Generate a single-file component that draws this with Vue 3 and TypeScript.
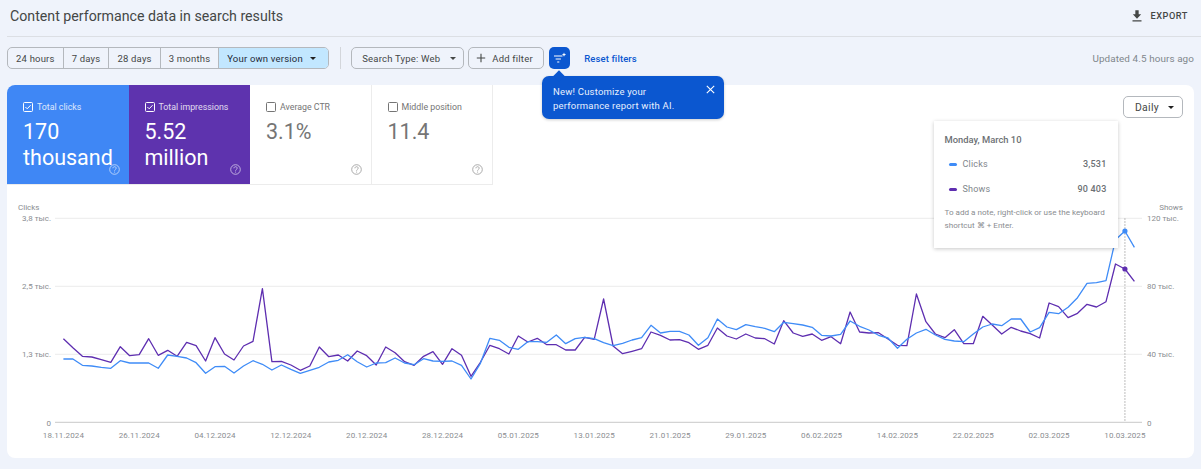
<script setup lang="ts">
const purple: number[] = [431,458,484,486,494,502,455,482,479,431,481,466,484,442,452,498,428,477,495,453,439,281,500,499,510,526,513,456,485,480,498,468,482,510,456,473,500,511,484,470,508,461,481,544,502,451,461,477,423,441,430,449,449,465,465,427,433,312,453,476,469,461,411,421,435,434,443,463,451,399,423,432,417,429,431,447,377,414,424,417,436,425,446,351,411,414,413,432,451,452,297,380,417,428,404,446,446,364,390,417,397,408,416,429,324,335,368,355,328,336,320,207,222,259]
const blue: number[] = [492,492,511,513,517,520,497,504,504,504,520,480,484,489,503,535,515,514,534,513,497,508,525,510,523,535,526,517,501,496,479,500,516,504,503,489,504,509,491,498,499,498,511,552,505,430,436,457,463,440,440,442,420,446,431,427,431,443,452,445,435,428,391,414,409,409,420,451,428,372,396,404,389,395,400,410,382,386,390,397,421,423,418,378,394,405,421,429,460,433,414,403,420,433,438,440,417,396,387,392,372,372,411,398,352,356,337,308,265,263,257,134,108,157]

const px = (i: number): number => 56.4 + 9.478 * i
const py = (v: number): number => 10 + v / 3
const toPoints = (list: number[]): string =>
  list.map((v, i) => `${px(i).toFixed(1)},${py(v).toFixed(1)}`).join(' ')

const purplePoints = toPoints(purple)
const bluePoints = toPoints(blue)
const hoverX = px(112)

const ranges = ['24 hours', '7 days', '28 days', '3 months']
const metrics = [
  { label: 'Total clicks', lines: ['170', 'thousand'], cls: 'blue', on: true },
  { label: 'Total impressions', lines: ['5.52', 'million'], cls: 'purple', on: true },
  { label: 'Average CTR', lines: ['3.1%'], cls: '', on: false },
  { label: 'Middle position', lines: ['11.4'], cls: '', on: false },
]
const grid = [
  { y: 33.3, left: '3,8 тыс.', right: '120 тыс.' },
  { y: 101.3, left: '2,5 тыс.', right: '80 тыс.' },
  { y: 169.3, left: '1,3 тыс.', right: '40 тыс.' },
]
const dates = ['18.11.2024','26.11.2024','04.12.2024','12.12.2024','20.12.2024','28.12.2024','05.01.2025','13.01.2025','21.01.2025','29.01.2025','06.02.2025','14.02.2025','22.02.2025','02.03.2025','10.03.2025']
</script>

<template>
  <div class="page">
    <header class="top">
      <h1>Content performance data in search results</h1>
      <div class="export">
        <svg width="10" height="12" viewBox="0 0 12 14"><path d="M4 0h4v5h3L6 10.2 1 5h3zM.6 12h10.8v1.6H.6z" fill="#444746"/></svg>
        <span>EXPORT</span>
      </div>
    </header>

    <div class="toolbar">
      <div class="group">
        <span v-for="r in ranges" :key="r" class="seg">{{ r }}</span>
        <span class="seg active">Your own version <i class="caret dark"></i></span>
      </div>
      <span class="divider"></span>
      <span class="chip search">Search Type: Web <i class="caret"></i></span>
      <span class="chip add">
        <svg width="10" height="10" viewBox="0 0 10 10"><path d="M5 .8v8.4M.8 5h8.4" stroke="#444746" stroke-width="1.1" fill="none"/></svg>
        Add filter
      </span>
      <span class="ai">
        <svg width="14" height="12" viewBox="0 0 14 12"><path d="M1 4h8.5M2.6 7h5.3M4.2 10h2.1" stroke="#fff" stroke-width="1.2" fill="none"/><path d="M11 .6l.6 1.5 1.5.6-1.5.6-.6 1.5-.6-1.5-1.5-.6 1.5-.6z" fill="#fff"/></svg>
      </span>
      <span class="reset">Reset filters</span>
      <span class="updated">Updated 4.5 hours ago</span>
      <div class="promo">
        <span class="arrow"></span>
        <p>New! Customize your<br />performance report with AI.</p>
        <svg class="close" width="9" height="9" viewBox="0 0 9 9"><path d="M.8.8l7.4 7.4M8.2.8L.8 8.2" stroke="#fff" stroke-width="1.1" fill="none"/></svg>
      </div>
    </div>

    <section class="card">
      <div class="head">
        <div class="metrics">
          <div v-for="m in metrics" :key="m.label" class="metric" :class="m.cls">
            <div class="label">
              <svg width="10" height="10" viewBox="0 0 10 10">
                <rect x=".5" y=".5" width="9" height="9" rx="1" fill="none" stroke="currentColor" stroke-width="1"/>
                <path v-if="m.on" d="M2.4 5l1.8 1.8 3.4-3.6" fill="none" stroke="currentColor" stroke-width="1"/>
              </svg>
              <span>{{ m.label }}</span>
            </div>
            <div class="value">
              <div v-for="l in m.lines" :key="l">{{ l }}</div>
            </div>
            <svg class="help" width="11" height="11" viewBox="0 0 11 11">
              <circle cx="5.5" cy="5.5" r="4.8" fill="none" stroke="currentColor" stroke-width=".8"/>
              <path d="M3.9 4.3c0-2.1 3.3-2.1 3.3-.1 0 1.2-1.6 1.2-1.6 2.5" fill="none" stroke="currentColor" stroke-width=".8"/>
              <circle cx="5.6" cy="8" r=".55" fill="currentColor"/>
            </svg>
          </div>
        </div>
        <span class="chip daily">Daily <i class="caret dark"></i></span>
      </div>

      <svg class="chart" width="1187" height="273" viewBox="0 0 1187 273">
        <text x="11" y="25" class="axis">Clicks</text>
        <text x="1176" y="25" class="axis" text-anchor="end">Shows</text>
        <g v-for="g in grid" :key="g.y">
          <line x1="48" x2="1135" :y1="g.y" :y2="g.y" stroke="#ececec" stroke-width="1"/>
          <text x="44" :y="g.y + 3" class="axis" text-anchor="end">{{ g.left }}</text>
          <text x="1140" :y="g.y + 3" class="axis">{{ g.right }}</text>
        </g>
        <line x1="48" x2="1135" y1="237.3" y2="237.3" stroke="#c8c8c8" stroke-width="1"/>
        <text x="44" y="240.5" class="axis" text-anchor="end">0</text>
        <text x="1140" y="240.5" class="axis">0</text>
        <text v-for="(d, i) in dates" :key="d" :x="px(i * 8)" y="253" class="axis date" text-anchor="middle">{{ d }}</text>
        <line :x1="hoverX" :x2="hoverX" y1="33" y2="237" stroke="#bdbdbd" stroke-width="1" stroke-dasharray="2 1"/>
        <polyline :points="purplePoints" fill="none" stroke="#5e2eb0" stroke-width="1.3" stroke-linejoin="round"/>
        <polyline :points="bluePoints" fill="none" stroke="#3f8cf7" stroke-width="1.3" stroke-linejoin="round"/>
        <circle :cx="hoverX" :cy="py(108)" r="2.6" fill="#3f8cf7"/>
        <circle :cx="hoverX" :cy="py(222)" r="2.6" fill="#5e2eb0"/>
      </svg>

      <div class="tip">
        <div class="tip-title">Monday, March 10</div>
        <div class="tip-row first">
          <i class="dash b"></i><span class="name">Clicks</span><span class="num">3,531</span>
        </div>
        <div class="tip-row second">
          <i class="dash p"></i><span class="name">Shows</span><span class="num">90 403</span>
        </div>
        <p class="note">To add a note, right-click or use the keyboard<br />shortcut ⌘ + Enter.</p>
      </div>
    </section>
  </div>
</template>

<style>
html, body { margin: 0; background: #eff3fb; overflow: hidden; }
</style>

<style scoped>
.page {
  width: 1201px;
  height: 469px;
  box-sizing: border-box;
  background: #eff3fb;
  font-family: Roboto, "Liberation Sans", sans-serif;
  color: #444746;
  overflow: hidden;
}
.top {
  height: 37px;
  box-sizing: border-box;
  margin-left: 7px;
  padding: 0 13px 5px 3px;
  display: flex;
  align-items: center;
  justify-content: space-between;
  border-bottom: 1px solid #dcdfe4;
}
h1 {
  margin: 0;
  font-size: 14.2px;
  font-weight: 400;
  color: #444746;
}
.export {
  display: flex;
  align-items: center;
  gap: 8px;
  font-size: 9.2px;
  font-weight: 500;
  letter-spacing: .55px;
}
.toolbar {
  position: relative;
  height: 48px;
  box-sizing: border-box;
  padding: 0 7px 6px;
  display: flex;
  align-items: center;
  font-size: 9.5px;
  letter-spacing: .2px;
}
.group {
  display: flex;
  height: 22px;
  box-sizing: border-box;
  border: 1px solid #b4b8bd;
  border-radius: 5px;
  overflow: hidden;
}
.seg {
  display: flex;
  align-items: center;
  padding: 0 8px;
  border-right: 1px solid #b4b8bd;
}
.seg.active {
  background: #c2e7ff;
  border-right: 0;
  width: 109px;
  box-sizing: border-box;
  color: #1f2a37;
}
.caret {
  display: inline-block;
  width: 0;
  height: 0;
  margin-left: 10px;
  border: 3px solid transparent;
  border-top: 3px solid #444746;
  border-bottom: 0;
  vertical-align: middle;
}
.caret.dark { border-top-color: #1f1f1f; }
.seg.active .caret { margin-left: 7px; }
.divider {
  width: 1px;
  height: 22px;
  margin: 0 10px 0 11px;
  background: #d3d6db;
}
.chip {
  display: inline-flex;
  align-items: center;
  box-sizing: border-box;
  height: 22px;
  border: 1px solid #b4b8bd;
  border-radius: 5px;
  white-space: nowrap;
}
.search { width: 113px; padding-left: 10px; }
.add { width: 76px; margin-left: 4px; padding-left: 7px; gap: 6px; }
.ai {
  width: 21px;
  height: 22px;
  margin-left: 5px;
  border-radius: 5px;
  background: #0b57d0;
  display: flex;
  align-items: center;
  justify-content: center;
}
.reset {
  margin-left: 14px;
  color: #0b57d0;
  font-weight: 500;
  letter-spacing: .1px;
}
.updated {
  margin-left: auto;
  color: #80868b;
  font-size: 9.9px;
  letter-spacing: .1px;
}
.promo {
  position: absolute;
  left: 542px;
  top: 39px;
  z-index: 2;
  width: 182px;
  height: 43px;
  box-sizing: border-box;
  padding: 9px 11px;
  background: #0b57d0;
  border-radius: 7px;
  color: #e8f0fe;
  box-shadow: 0 1px 3px rgba(0,0,0,.2);
}
.promo p { margin: 0; font-size: 9.5px; line-height: 14px; letter-spacing: .2px; }
.arrow {
  position: absolute;
  left: 13px;
  top: -4px;
  width: 8px;
  height: 8px;
  background: #0b57d0;
  transform: rotate(45deg);
}
.close { position: absolute; right: 9px; top: 9px; }
.card {
  position: relative;
  width: 1187px;
  height: 373px;
  margin-left: 7px;
  background: #fff;
  border-radius: 8px;
  overflow: hidden;
}
.head {
  display: flex;
  justify-content: space-between;
  align-items: flex-start;
  height: 100px;
}
.metrics {
  display: flex;
  height: 100px;
  box-sizing: border-box;
  border-bottom: 1px solid #ececec;
}
.metric {
  position: relative;
  flex: none;
  width: 121.5px;
  box-sizing: border-box;
  padding: 17px 16px 0;
  border-right: 1px solid #ececec;
  color: #757575;
}
.metric.blue { background: #3f87f5; color: #fff; border-right: 0; }
.metric.purple { background: #5e33ae; color: #fff; border-right: 0; }
.label {
  display: flex;
  align-items: center;
  gap: 4px;
  font-size: 8.8px;
  white-space: nowrap;
}
.metric.blue .label span, .metric.purple .label span { opacity: .82; }
.value {
  margin-top: 7px;
  font-size: 21.5px;
  line-height: 26px;
}
.help { position: absolute; right: 9px; bottom: 9px; opacity: .75; }
.daily {
  width: 60px;
  margin: 11px 11px 0 0;
  padding-left: 11px;
  font-size: 10.4px;
  letter-spacing: .3px;
}
.daily .caret { margin-left: 9px; }
.chart { display: block; }
.axis {
  font-size: 8px;
  fill: #8a8d91;
}
.date { letter-spacing: .1px; }
.tip {
  position: absolute;
  left: 926.5px;
  top: 36px;
  width: 184px;
  height: 127px;
  box-sizing: border-box;
  padding: 13px 11px;
  background: #fff;
  box-shadow: 0 1px 4px rgba(0,0,0,.22);
  font-size: 9px;
  color: #80868b;
}
.tip-title { font-weight: 500; font-size: 9.4px; line-height: 12px; color: #6c7074; }
.tip-row {
  display: flex;
  align-items: center;
  height: 12px;
  padding-left: 4px;
  letter-spacing: .2px;
}
.tip-row.first { margin-top: 12px; }
.tip-row.second { margin-top: 13px; }
.dash { width: 8px; height: 3px; border-radius: 1.5px; margin-right: 6px; }
.dash.b { background: #3f8cf7; }
.dash.p { background: #5e2eb0; }
.num { margin-left: auto; color: #6c7074; font-weight: 500; }
.note {
  margin: 11px 0 0;
  font-size: 8.1px;
  line-height: 13px;
  white-space: nowrap;
  color: #8a8d91;
}
</style>
